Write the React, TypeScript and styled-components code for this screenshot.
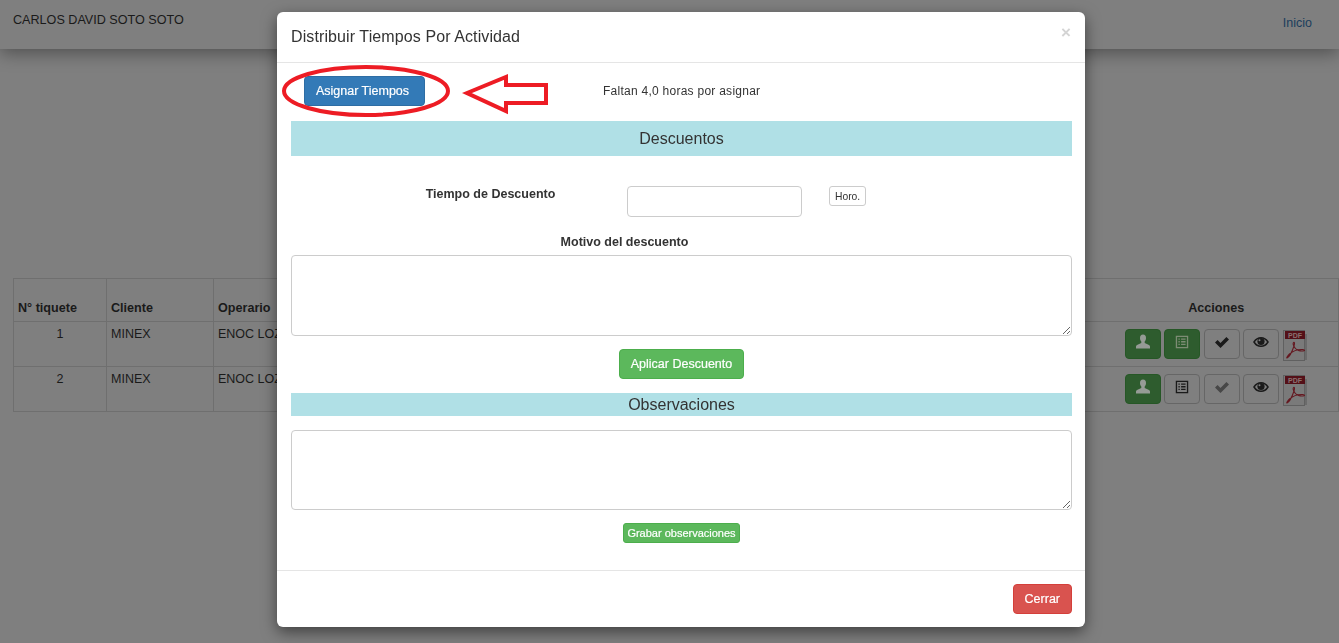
import styled, { createGlobalStyle } from "styled-components";

const GlobalStyle = createGlobalStyle`
  html, body {
    margin: 0;
    padding: 0;
    height: 100%;
    overflow: hidden;
    background-color: #7f7f7f;
    font-family: "Liberation Sans", Arial, sans-serif;
    font-size: 13px;
    color: #1a1a1a;
  }
  * {
    box-sizing: border-box;
  }
`;

const Navbar = styled.nav`
  display: flex;
  justify-content: space-between;
  height: 49px;
  padding: 13px 27px 0 13px;
  background-color: #7f7f7f;
  box-shadow: 0 4px 18px rgba(0, 0, 0, 0.38);
`;
const UserName = styled.span`
  font-size: 12.6px;
  line-height: 15px;
`;
const NavLink = styled.a`
  margin-top: 3px;
  font-size: 12.5px;
  line-height: 15px;
  color: #1b3d5c;
`;

const TicketTable = styled.table`
  width: calc(100% - 13px);
  margin: 229px 0 0 13px;
  border-collapse: collapse;
  table-layout: fixed;
`;
const HeadCell = styled.th<{ $center?: boolean; $open?: boolean }>`
  height: 43px;
  padding: 0 4px 5px;
  border: 1px solid #6f6f6f;
  ${(props) => props.$open && "border-right: none;"}
  font-size: 12.6px;
  line-height: 15px;
  vertical-align: bottom;
  text-align: ${(props) => (props.$center ? "center" : "left")};
`;
const ActionsHead = styled(HeadCell)`
  border-left: none;
`;
const BodyCell = styled.td<{ $center?: boolean; $open?: boolean }>`
  height: 45px;
  padding: 5px 4px 4px;
  border: 1px solid #6f6f6f;
  ${(props) => props.$open && "border-right: none;"}
  font-size: 12.5px;
  line-height: 15px;
  vertical-align: top;
  overflow: hidden;
  white-space: nowrap;
  text-align: ${(props) => (props.$center ? "center" : "left")};
`;
const ActionCell = styled.td`
  padding: 7px 0 0 30px;
  border: 1px solid #6f6f6f;
  border-left: none;
  vertical-align: top;
`;
const ActionGroup = styled.div`
  display: flex;
  align-items: flex-start;
  gap: 3.5px;
`;
const ActionButton = styled.button<{ $green?: boolean; $disabled?: boolean }>`
  display: flex;
  align-items: center;
  justify-content: center;
  width: 36px;
  height: 30px;
  padding: 0 0 4px;
  border-radius: 4px;
  border: 1px solid ${(props) => (props.$green ? "#265726" : "#666666")};
  background-color: ${(props) => (props.$green ? "#2e5c2e" : "transparent")};
  color: ${(props) => (props.$disabled ? "#474747" : "#1a1a1a")};
  svg {
    display: block;
    width: 16px;
    height: 16px;
  }
`;
const PdfLink = styled.a`
  display: block;
  margin-top: 1px;
`;

const ModalLayer = styled.div`
  position: fixed;
  inset: 0;
  padding: 12px 0 0 277px;
`;
const ModalBox = styled.div`
  position: relative;
  width: 808px;
  height: 615px;
  border-radius: 6px;
  background-color: #fff;
  box-shadow: 0 5px 15px rgba(0, 0, 0, 0.5);
  color: #333;
`;
const ModalHeader = styled.header`
  display: flex;
  align-items: center;
  justify-content: space-between;
  height: 51px;
  padding: 0 14px;
  border-bottom: 1px solid #e5e5e5;
`;
const ModalTitle = styled.h4`
  margin: 0;
  font-size: 16px;
  font-weight: 400;
  letter-spacing: 0.1px;
  line-height: 20px;
`;
const CloseMark = styled.span`
  margin: 0 0 8px;
  font-size: 17px;
  font-weight: 700;
  line-height: 18px;
  color: #d4d4d4;
`;
const ModalBody = styled.div`
  height: 507px;
  padding: 13px 13px 0 14px;
`;
const AssignRow = styled.div`
  display: flex;
  align-items: center;
  height: 30px;
  padding-left: 13px;
`;
const Notice = styled.span`
  margin-left: 178px;
  font-size: 12px;
  letter-spacing: 0.26px;
`;
const Button = styled.button<{ $color: string; $border: string }>`
  display: block;
  height: 30px;
  padding: 0 11px;
  border: 1px solid ${(props) => props.$border};
  border-radius: 4px;
  background-color: ${(props) => props.$color};
  font-family: inherit;
  font-size: 12.5px;
  font-weight: 400;
  color: #fff;
  -webkit-text-stroke: 0.2px #fff;
`;
const AssignButton = styled(Button)`
  width: 121px;
  padding: 0 4px 0 0;
`;
const CenterRow = styled.div<{ $top: number }>`
  display: flex;
  justify-content: center;
  margin-top: ${(props) => props.$top}px;
`;
const SmallGreenButton = styled(Button)`
  height: 20px;
  padding: 0 3.5px;
  border-radius: 3px;
  font-size: 11px;
`;
const SectionBar = styled.div<{ $height: number; $top: number }>`
  height: ${(props) => props.$height}px;
  margin-top: ${(props) => props.$top}px;
  background-color: #b0e0e6;
  font-size: 16px;
  line-height: ${(props) => props.$height}px;
  text-align: center;
`;
const TimeRow = styled.div`
  display: grid;
  grid-template-columns: 336px 175px auto;
  align-items: start;
  margin-top: 30px;
`;
const TimeLabel = styled.label`
  padding: 1px 0 0 63px;
  font-size: 12.5px;
  font-weight: 700;
  line-height: 15px;
  text-align: center;
`;
const TimeInput = styled.input`
  display: block;
  width: 175px;
  height: 31px;
  border: 1px solid #ccc;
  border-radius: 4px;
  background-color: #fff;
`;
const UnitButton = styled.button`
  justify-self: start;
  height: 20px;
  margin-left: 27px;
  padding: 0 5px;
  border: 1px solid #ccc;
  border-radius: 3px;
  background-color: #fff;
  font-family: inherit;
  font-size: 10.3px;
  color: #333;
`;
const ReasonLabel = styled.label`
  display: block;
  margin: 15px 114px 3px 0;
  font-size: 12.5px;
  font-weight: 700;
  line-height: 20px;
  text-align: center;
`;
const NoteArea = styled.textarea<{ $height: number; $top?: number }>`
  display: block;
  width: 781px;
  height: ${(props) => props.$height}px;
  margin-top: ${(props) => props.$top || 0}px;
  border: 1px solid #ccc;
  border-radius: 4px;
  background-color: #fff;
`;
const ModalFooter = styled.footer`
  display: flex;
  justify-content: flex-end;
  height: 57px;
  padding: 13px 13px 0 0;
  border-top: 1px solid #e5e5e5;
`;
const Markup = styled.svg`
  position: absolute;
  left: 0;
  top: 0;
  pointer-events: none;
`;

const UserIcon = () => (
  <svg viewBox="0 0 16 16" fill="#969b96">
    <path d="M8 .5C6 .5 5 2 5 4c0 1.400.5 2.700 1.300 3.500V9L2 11c-.7.4-1 1-1 1.600V14.500h14v-1.900c0-.6-.3-1.200-1-1.600L9.700 9V7.500c.8-.8 1.300-2.100 1.300-3.500C11 2 10 .5 8 .5z" />
  </svg>
);
const ListIcon = ({ color }: { color: string }) => (
  <svg viewBox="-1 -1 18 18" fill={color}>
    <path
      fillRule="evenodd"
      d="M1 1h14v14H1zM2.500 2.500v11h11v-11zM4 4h1.500v1.500H4zM7 4h5v1.500H7zM4 7h1.500v1.500H4zM7 7h5v1.500H7zM4 10h1.500v1.500H4zM7 10h5v1.500H7z"
    />
  </svg>
);
const CheckIcon = () => (
  <svg viewBox="0 0 16 16" fill="currentColor">
    <path d="M1 8.600l2.600-2.600 2.900 2.900L12.400 3 15 5.600l-8.500 8.400z" />
  </svg>
);
const EyeIcon = () => (
  <svg viewBox="0 0 16 16">
    <path
      d="M1 8c1.800-2.900 4.200-4.300 7-4.300S13.200 5.100 15 8c-1.800 2.900-4.200 4.300-7 4.300S2.800 10.900 1 8z"
      fill="none"
      stroke="currentColor"
      strokeWidth="1.500"
    />
    <circle cx="8" cy="7.500" r="3.600" fill="currentColor" />
    <circle cx="6.500" cy="6.200" r="1" fill="#7f7f7f" />
  </svg>
);
const PdfIcon = () => (
  <svg width="24" height="31" viewBox="0 0 24 31">
    <rect x="0.500" y="0.500" width="21" height="30" fill="#7a7a7a" stroke="#606060" />
    <rect x="22" y="4" width="2" height="26" fill="#6b6b6b" />
    <rect x="2" y="1" width="20" height="8" fill="#541018" />
    <text x="12" y="7.500" fontFamily="Liberation Sans" fontSize="7" fontWeight="700" textAnchor="middle" fill="#8a7070">
      PDF
    </text>
    <path
      d="M4 28c2-1 5-6 7-12 .8-2.500.6-4-.4-3.500-1 .5-.4 3 1.400 5.500 1.800 2.500 6 3.500 9 2.800 1-.3.5-1.200-1.500-1.300-3.500-.2-9 1-13 4.500-2 1.800-3.200 4-2.500 4z"
      fill="none"
      stroke="#651820"
      strokeWidth="1.100"
    />
  </svg>
);

const tickets = [
  { id: 1, listGreen: true, checkDisabled: false },
  { id: 2, listGreen: false, checkDisabled: true },
];

function App() {
  return (
    <div>
      <GlobalStyle />
      <Navbar>
        <UserName>CARLOS DAVID SOTO SOTO</UserName>
        <NavLink>Inicio</NavLink>
      </Navbar>
      <TicketTable>
        <colgroup>
          <col width="93" />
          <col width="107" />
          <col />
          <col width="244" />
        </colgroup>
        <thead>
          <tr>
            <HeadCell>N° tiquete</HeadCell>
            <HeadCell>Cliente</HeadCell>
            <HeadCell $open>Operario</HeadCell>
            <ActionsHead $center>Acciones</ActionsHead>
          </tr>
        </thead>
        <tbody>
          {tickets.map((ticket) => (
            <tr key={ticket.id}>
              <BodyCell $center>{ticket.id}</BodyCell>
              <BodyCell>MINEX</BodyCell>
              <BodyCell $open>ENOC LOZANO</BodyCell>
              <ActionCell>
                <ActionGroup>
                  <ActionButton $green>
                    <UserIcon />
                  </ActionButton>
                  <ActionButton $green={ticket.listGreen}>
                    <ListIcon color={ticket.listGreen ? "#7d8c74" : "#1a1a1a"} />
                  </ActionButton>
                  <ActionButton $disabled={ticket.checkDisabled}>
                    <CheckIcon />
                  </ActionButton>
                  <ActionButton>
                    <EyeIcon />
                  </ActionButton>
                  <PdfLink>
                    <PdfIcon />
                  </PdfLink>
                </ActionGroup>
              </ActionCell>
            </tr>
          ))}
        </tbody>
      </TicketTable>
      <ModalLayer>
        <ModalBox>
          <ModalHeader>
            <ModalTitle>Distribuir Tiempos Por Actividad</ModalTitle>
            <CloseMark>×</CloseMark>
          </ModalHeader>
          <ModalBody>
            <AssignRow>
              <AssignButton $color="#337ab7" $border="#2e6da4">
                Asignar Tiempos
              </AssignButton>
              <Notice>Faltan 4,0 horas por asignar</Notice>
            </AssignRow>
            <SectionBar $height={35} $top={15}>
              Descuentos
            </SectionBar>
            <TimeRow>
              <TimeLabel>Tiempo de Descuento</TimeLabel>
              <TimeInput />
              <UnitButton>Horo.</UnitButton>
            </TimeRow>
            <ReasonLabel>Motivo del descuento</ReasonLabel>
            <NoteArea $height={81} />
            <CenterRow $top={13}>
              <Button $color="#5cb85c" $border="#4cae4c">
                Aplicar Descuento
              </Button>
            </CenterRow>
            <SectionBar $height={23} $top={14}>
              Observaciones
            </SectionBar>
            <NoteArea $height={80} $top={14} />
            <CenterRow $top={13}>
              <SmallGreenButton $color="#5cb85c" $border="#4cae4c">
                Grabar observaciones
              </SmallGreenButton>
            </CenterRow>
          </ModalBody>
          <ModalFooter>
            <Button $color="#d9534f" $border="#d43f3a">
              Cerrar
            </Button>
          </ModalFooter>
          <Markup width="808" height="130" viewBox="0 0 808 130">
            <ellipse cx="89" cy="79" rx="82" ry="24" fill="none" stroke="#ed1c24" strokeWidth="4" />
            <path d="M190 81l39-16v8h40v18h-40v8z" fill="#fff" stroke="#ed1c24" strokeWidth="4" />
          </Markup>
        </ModalBox>
      </ModalLayer>
    </div>
  );
}

export default App;
